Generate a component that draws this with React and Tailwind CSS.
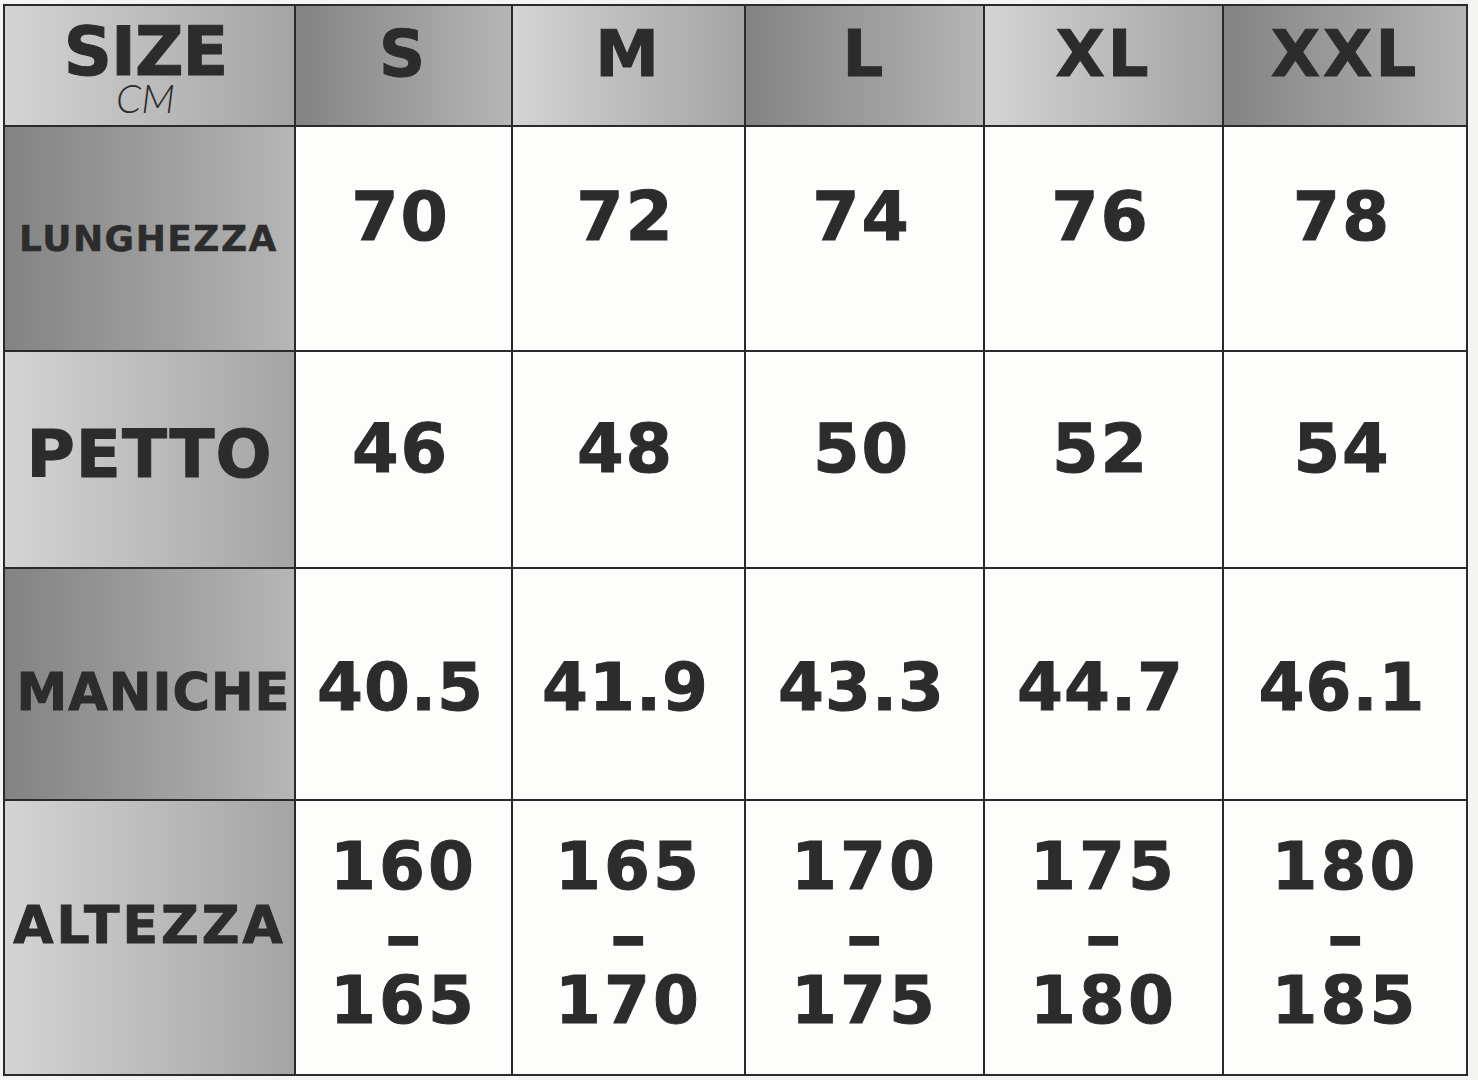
import React from "react";

const FONT = { fontFamily: '"DejaVu Sans", "Liberation Sans", sans-serif' };

const LIGHT = "bg-linear-to-r from-[#d4d4d4] to-[#a4a4a4]";
const DARK = "bg-linear-to-r from-[#838383] to-[#b6b6b6]";
const HEAVY = "[-webkit-text-stroke:1px_#2c2c2c]";

const headers = [
  { t: "S", g: DARK },
  { t: "M", g: LIGHT },
  { t: "L", g: DARK },
  { t: "XL", g: LIGHT },
  { t: "XXL", g: DARK },
];

export default function App() {
  return (
    <div className="w-[1478px] h-[1080px] bg-[#f4f4f2] overflow-hidden" style={FONT}>
      <div className="ml-[3px] mt-[4px] w-[1465px] h-[1072px] border-2 border-[#2a2a2a] bg-[#2a2a2a] grid gap-[2px] grid-cols-[289px_215px_231px_237px_237px_242px] grid-rows-[119px_223px_215px_230px_273px] text-[#2c2c2c]">
        {/* Header row */}
        <div className={`${LIGHT} flex flex-col items-center pt-[18px] pr-[8px]`}>
          <div className={`h-[56px] leading-[56px] text-[67px] font-bold tracking-[-1px] ${HEAVY}`}>SIZE</div>
          <div
            className="h-[36px] leading-[36px] text-[40px] italic font-light"
            style={{ fontFamily: 'Lato, "Open Sans", sans-serif' }}
          >
            CM
          </div>
        </div>
        {headers.map((h) => (
          <div key={h.t} className={`${h.g} flex items-center justify-center pb-[24px]`}>
            <span className={`text-[64px] leading-none font-bold tracking-[3px] ${HEAVY}`}>{h.t}</span>
          </div>
        ))}

        {/* LUNGHEZZA */}
        <div className={`${DARK} flex items-center justify-center pr-[2px]`}>
          <span className={`text-[36px] leading-none font-bold tracking-[1.5px] [-webkit-text-stroke:0.5px_#2c2c2c]`}>LUNGHEZZA</span>
        </div>
        {["70", "72", "74", "76", "78"].map((v) => (
          <div key={v} className="bg-[#fdfdfc] flex items-center justify-center pb-[44px] pr-[6px]">
            <span className={`text-[68px] leading-none font-bold tracking-[2px] ${HEAVY}`}>{v}</span>
          </div>
        ))}

        {/* PETTO */}
        <div className={`${LIGHT} flex items-center justify-center pb-[10px]`}>
          <span className={`text-[66px] leading-none font-bold tracking-[1px] ${HEAVY}`}>PETTO</span>
        </div>
        {["46", "48", "50", "52", "54"].map((v) => (
          <div key={v} className="bg-[#fdfdfc] flex items-center justify-center pb-[20px] pr-[6px]">
            <span className={`text-[67px] leading-none font-bold tracking-[2px] ${HEAVY}`}>{v}</span>
          </div>
        ))}

        {/* MANICHE */}
        <div className={`${DARK} flex items-center justify-center pt-[16px] pl-[8px]`}>
          <span className={`text-[51px] leading-none font-bold tracking-[1px] ${HEAVY}`}>MANICHE</span>
        </div>
        {["40.5", "41.9", "43.3", "44.7", "46.1"].map((v) => (
          <div key={v} className="bg-[#fdfdfc] flex items-center justify-center pt-[8px] pr-[6px]">
            <span className={`text-[66px] leading-none font-bold tracking-[1px] ${HEAVY}`}>{v}</span>
          </div>
        ))}

        {/* ALTEZZA */}
        <div className={`${LIGHT} flex items-center justify-center pb-[26px]`}>
          <span className={`text-[52px] leading-none font-bold tracking-[3px] ${HEAVY}`}>ALTEZZA</span>
        </div>
        {[
          ["160", "165"],
          ["165", "170"],
          ["170", "175"],
          ["175", "180"],
          ["180", "185"],
        ].map(([a, b]) => (
          <div key={a} className="bg-[#fdfdfc] flex flex-col items-center justify-center pb-[8px]">
            <div className={`h-[77px] leading-[77px] text-[66px] font-bold tracking-[3px] ${HEAVY}`}>{a}</div>
            <div className="h-[57px] flex items-center justify-center">
              <span className="text-[44px] leading-none font-bold scale-x-[1.75] translate-y-[5px] [-webkit-text-stroke:3.5px_#2c2c2c]">-</span>
            </div>
            <div className={`h-[77px] leading-[77px] text-[66px] font-bold tracking-[3px] ${HEAVY}`}>{b}</div>
          </div>
        ))}
      </div>
    </div>
  );
}
